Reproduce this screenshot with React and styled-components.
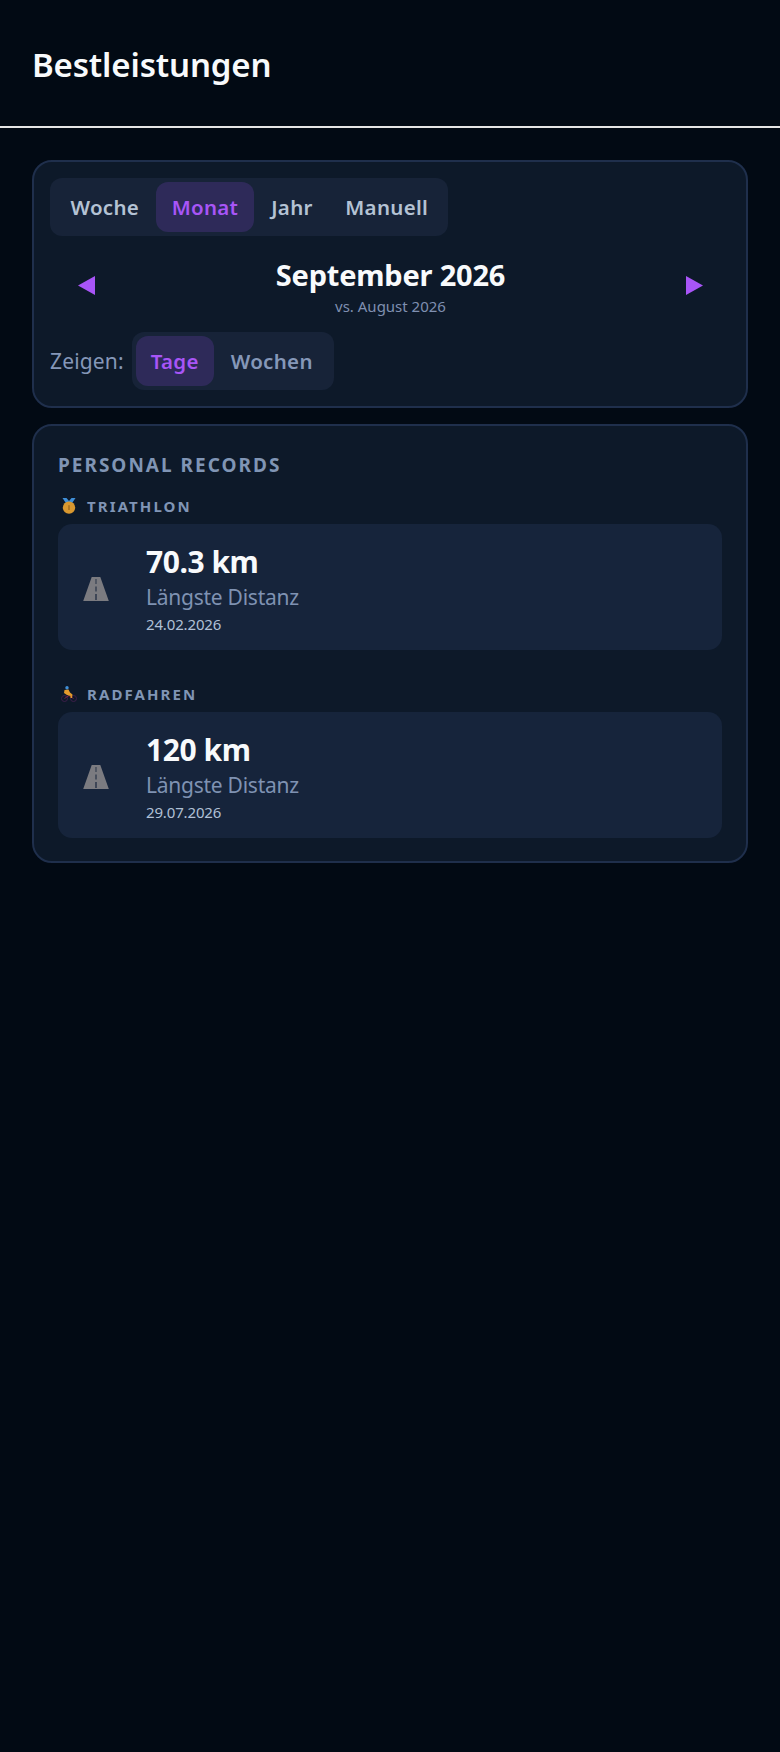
import React from "react";
import styled, { createGlobalStyle } from "styled-components";

const Global = createGlobalStyle`
  html, body { margin: 0; padding: 0; background: #020a14; }
  body { font-family: "Noto Sans", "Open Sans", sans-serif; min-height: 1752px; color: #f1f5f9; }
  * { box-sizing: border-box; }
`;
const Header = styled.header`
  height: 128px; padding: 0 32px; display: flex; align-items: center;
  border-bottom: 2px solid #e5e5e5;
`;
const Title = styled.h1`
  margin: 4px 0 0; font-size: 33px; line-height: 44px; font-weight: 600; color: #f8fafc; letter-spacing: -0.15px;
`;
const Main = styled.main`
  padding: 32px 32px 0; display: flex; flex-direction: column; gap: 16px;
`;
const Card = styled.section`
  border: 2px solid #1f2f4c; border-radius: 20px; background: #0d1929;
`;
const ControlCard = styled(Card)`
  height: 248px; padding: 16px; display: flex; flex-direction: column; align-items: flex-start;
`;
const RecordsCard = styled(Card)`
  height: 439px; padding: 24px;
`;
const Segments = styled.div`
  display: flex; background: #172338; border-radius: 12px; padding: 4px; height: 58px;
`;
const Segment = styled.div`
  height: 50px; padding: 0 ${p => p.$pad}px; display: flex; align-items: center; border-radius: 12px;
  font-size: 20.5px; font-weight: 600; letter-spacing: 0.3px;
  background: ${p => (p.$active ? "#2e2a59" : "transparent")};
  color: ${p => (p.$active ? "#a855f7" : p.$muted ? "#8597b8" : "#b4c2d4")};
`;
const NavRow = styled.div`
  align-self: stretch; display: flex; align-items: center; justify-content: space-between;
  padding: 0 27px 0 28px; height: 96px;
`;
const Arrow = styled.svg`
  width: 17px; height: 19px; display: block; fill: #a855f7; margin-top: 3px;
`;
const Period = styled.div`
  display: flex; flex-direction: column; align-items: center; margin-top: 5px;
`;
const PeriodName = styled.div`
  font-size: 29px; line-height: 36px; font-weight: 700; color: #f8fafc; letter-spacing: -0.2px;
`;
const PeriodSub = styled.div`
  font-size: 15px; line-height: 20px; color: #7f8fb0; margin-top: 3px;
`;
const ShowRow = styled.div`
  display: flex; align-items: center; gap: 8px;
`;
const ShowLabel = styled.span`
  font-size: 21px; color: #8597b8; letter-spacing: 0.15px;
`;
const RecordsTitle = styled.h2`
  margin: 0; font-size: 19px; line-height: 30px; font-weight: 700; letter-spacing: 2px; color: #8095b5;
`;
const Group = styled.div`
  margin-top: ${p => (p.$first ? 14 : 32)}px;
`;
const GroupLabel = styled.h3`
  margin: 0 0 6px; height: 24px; display: flex; align-items: center; gap: 10px;
  font-size: 15px; font-weight: 700; letter-spacing: 2.1px; color: #8095b5; padding-left: 3px;
`;
const Emoji = styled.svg`
  width: 16px; height: 16px; display: block; flex: none;
`;
const Record = styled.div`
  height: 126px; border-radius: 14px; background: #16243b; display: flex; align-items: center;
`;
const RoadIcon = styled.svg`
  width: 26px; height: 24px; margin-left: 25px; margin-right: 37px; margin-top: 3px; fill: #7b7b80; flex: none;
`;
const RecordText = styled.div`
  display: flex; flex-direction: column; margin-top: 3px;
`;
const Value = styled.div`
  font-size: 30px; line-height: 40px; font-weight: 700; color: #f8fafc; letter-spacing: -0.45px;
`;
const RecordLabel = styled.div`
  font-size: 21px; line-height: 28px; margin-top: 1px; color: #7f92b2; letter-spacing: -0.25px;
`;
const RecordDate = styled.div`
  font-size: 15px; line-height: 21px; margin-top: 3px; color: #b0c0d6; letter-spacing: -0.15px;
`;

const Road = () => (
  <RoadIcon viewBox="0 0 26 24">
    <path
      fillRule="evenodd"
      d="M8.7 0H17.3L25.8 24H0.2ZM12.6 2V7H13.4V2ZM12.5 9.5V14.5H13.5V9.5ZM12.4 17V23H13.6V17Z"
    />
  </RoadIcon>
);
const Medal = () => (
  <Emoji viewBox="0 0 16 16">
    <path d="M1.5 0H5.5L8 3L10.5 0H14.5L10.5 6H5.5Z" fill="#3f8fd8" />
    <circle cx="8" cy="9.6" r="6.2" fill="#d9982f" />
    <rect x="7.3" y="7.2" width="1.4" height="4.8" fill="#a06a1c" />
  </Emoji>
);
const Cyclist = () => (
  <Emoji viewBox="0 0 16 16">
    <circle cx="3.5" cy="12.5" r="3" fill="none" stroke="#3d1f4a" strokeWidth="1" />
    <circle cx="12.5" cy="12.5" r="3" fill="none" stroke="#3d1f4a" strokeWidth="1" />
    <path d="M3.5 12.5L8 9.5L12.5 12.5" fill="none" stroke="#7a1f4a" strokeWidth="1" />
    <circle cx="6" cy="1.7" r="1.7" fill="#3f8fd8" />
    <path d="M3.5 4L7.5 3.5L9 6.5L11.5 8.5L11 12H9.5V10L6 9L3 7Z" fill="#e39a2c" />
  </Emoji>
);

const records = [
  { label: "TRIATHLON", icon: <Medal />, value: "70.3 km", date: "24.02.2026" },
  { label: "RADFAHREN", icon: <Cyclist />, value: "120 km", date: "29.07.2026" },
];

export default function App() {
  return (
    <>
      <Global />
      <Header><Title>Bestleistungen</Title></Header>
      <Main>
        <ControlCard>
          <Segments>
            <Segment $pad={16.5}>Woche</Segment>
            <Segment $pad={16} $active>Monat</Segment>
            <Segment $pad={17}>Jahr</Segment>
            <Segment $pad={15.5}>Manuell</Segment>
          </Segments>
          <NavRow>
            <Arrow viewBox="0 0 17 19"><path d="M17 0V19L0 9.5Z" /></Arrow>
            <Period>
              <PeriodName>September 2026</PeriodName>
              <PeriodSub>vs. August 2026</PeriodSub>
            </Period>
            <Arrow viewBox="0 0 17 19"><path d="M0 0V19L17 9.5Z" /></Arrow>
          </NavRow>
          <ShowRow>
            <ShowLabel>Zeigen:</ShowLabel>
            <Segments>
              <Segment $pad={15} $active>Tage</Segment>
              <Segment $pad={17} $muted>Wochen</Segment>
            </Segments>
          </ShowRow>
        </ControlCard>
        <RecordsCard>
          <RecordsTitle>PERSONAL RECORDS</RecordsTitle>
          {records.map((r, i) => (
            <Group key={r.label} $first={i === 0}>
              <GroupLabel>{r.icon}{r.label}</GroupLabel>
              <Record>
                <Road />
                <RecordText>
                  <Value>{r.value}</Value>
                  <RecordLabel>Längste Distanz</RecordLabel>
                  <RecordDate>{r.date}</RecordDate>
                </RecordText>
              </Record>
            </Group>
          ))}
        </RecordsCard>
      </Main>
    </>
  );
}
